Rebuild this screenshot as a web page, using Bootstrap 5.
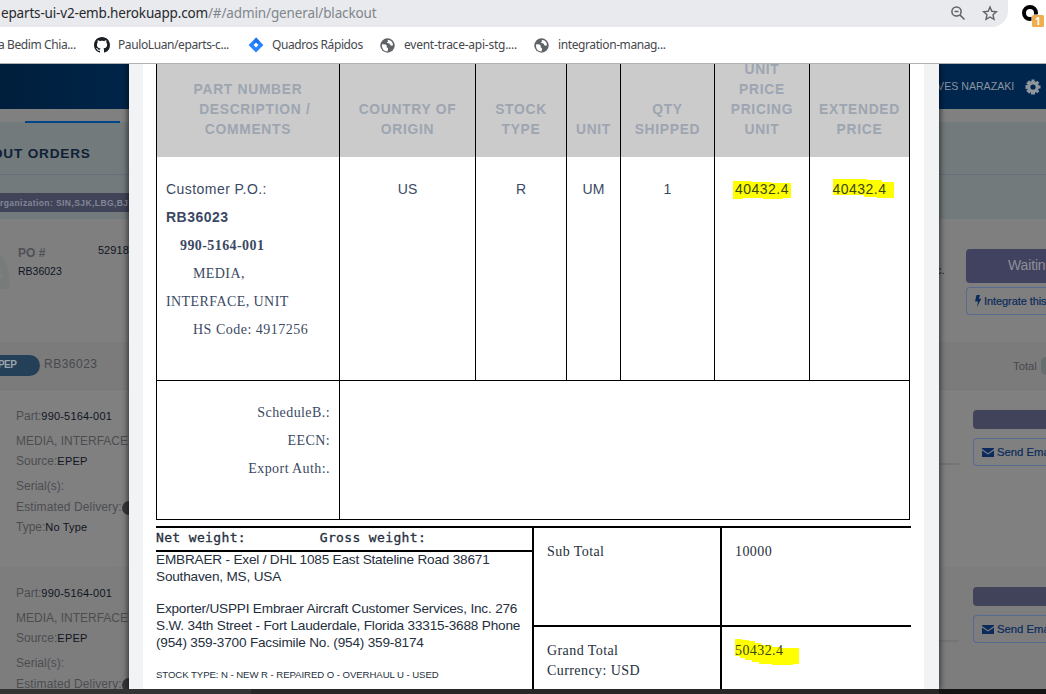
<!DOCTYPE html>
<html lang="en">
<head>
<meta charset="utf-8">
<title>Blackout orders</title>
<link href="https://cdn.jsdelivr.net/npm/bootstrap@5.3.0/dist/css/bootstrap.min.css" rel="stylesheet">
<style>
body{width:1046px;height:694px;overflow:hidden;font-family:"Liberation Sans",Arial,sans-serif;font-size:12px;line-height:20px;color:#3a4963;background:#fff;white-space:nowrap}
svg{display:block;flex:none}
.chrome-ui{font-family:"Noto Sans","Open Sans",sans-serif}
.address{height:27px;width:1008px;background:#e8eaed;border-radius:0 0 16px 0;font-size:13.5px;line-height:27px;color:#80868b;padding-left:1px;letter-spacing:-.13px}
.address b{font-weight:400;color:#27292d;letter-spacing:-.17px}
.ext{width:38px;height:27px}
.bookmarks{height:37px;border-bottom:1px solid #b3b3b3;font-size:12px;color:#45484d;line-height:36px;letter-spacing:-.4px}
.stage{height:625px;display:grid;grid-template-columns:129px 810px 107px;overflow:hidden}
.side{background:#808080;overflow:hidden;height:625px;min-width:0}
.top-l{height:45px;background:linear-gradient(90deg,#001e3c,#002549)}
.top-r{height:45px;background:#00264e;color:#8b939d;font-size:10.6px;line-height:45px}
.tabs{height:14px;border-bottom:1px solid #747a7e}
.tabline{width:95px;height:2px;background:#004789;margin-left:25px;margin-top:12px;position:relative}
.teal{background:#727a7b}
.head{height:52px;border-bottom:1px solid #666f83;line-height:62px;font-size:13.6px;font-weight:700;letter-spacing:.8px;color:#0e2137}
.orgwrap{height:44px;padding-top:18px}
.org{background:#414459;color:#818797;height:19px;line-height:20px;font-size:8.5px;font-weight:700;letter-spacing:.42px}
.po{height:123px;background:#7f7f7f}
.band{height:48px;background:#7b7b7b;border-bottom:1px solid #777}
.pill{width:40px;height:21px;background:#243f58;border-radius:0 11px 11px 0;color:#9aa3ab;font-size:10px;line-height:19px;font-weight:700;letter-spacing:-.6px;text-indent:-2px}
.item{height:177px;padding:16px 0 0 16px;color:#4c4d51}
.item.alt{background:#7d7d7d}
.item b,.dk{font-weight:400;color:#10151f;font-size:11px}
.item b{letter-spacing:.18px}
.item div{height:20px}
.est{letter-spacing:.13px}
.dot{display:inline-block;width:14px;height:14px;border-radius:7px;background:#37383a;vertical-align:-4px}
.bigbtn{background:#41425f;color:#8e8f98;height:34px;border-radius:4px 0 0 4px;font-size:14px;line-height:32px;padding-left:42px;letter-spacing:-.15px}
.obtn{border:1px solid #566b8f;border-right:0;border-radius:4px 0 0 4px;height:28px;color:#0b2b5c;padding-left:8px;-webkit-text-stroke:.2px #0b2b5c}
.bar{height:19px;background:#41435a;border-radius:4px 0 0 4px}
.rule{width:20px;height:2px;margin:53px 14px 0 0;background:#747474;flex:none}
.dlg{background:#f1f3f5;padding:0 15px 0 14px;box-shadow:0 0 6px 1px rgba(0,0,0,.65);z-index:2;height:625px;overflow:visible}
.sheet{background:#fff;height:625px;padding:0 13px;overflow:hidden}
.lines{display:grid;grid-template-columns:183px 136px 91px 54px 94px 95px 101px}
.lines>div{border-left:1px solid #000;overflow:hidden}
.lines>div.last{border-right:1px solid #000}
.lines .th0{height:93px;background:#cbcbcb;color:#9da5b1;font-weight:700;font-size:13.8px;letter-spacing:.72px;display:flex;align-items:flex-end;justify-content:center;text-align:center;padding-bottom:17px}
.lines .td0{height:223px;padding-top:18px;text-align:center;font-size:14px;line-height:28px}
.lines .left{text-align:left;padding-left:9px}
.ser{font-family:"Liberation Serif",Tinos,serif;font-size:14px;letter-spacing:.42px}
.lines .ser{position:relative;top:1px}
.sch{height:140px;border:1px solid #000;margin-right:1px;line-height:28px}
.sch .k{width:183px;border-right:1px solid #000;padding:18px 9px 0 0;text-align:right}
.foot{margin-top:6px;height:170px;width:755px;border-top:2px solid #000;display:grid;grid-template-columns:376px 190px 189px;color:#252f3d}
.net{height:24px;border-bottom:2px solid #000;font:13px/20px "DejaVu Sans Mono",monospace;letter-spacing:.36px;white-space:pre;-webkit-text-stroke:.3px #252f3d}
.addr{font-size:13.6px;line-height:17px;letter-spacing:-.19px;position:relative;top:-1px}
.cellv{border-left:2px solid #000;padding-left:13px}
.sub0{height:99px;padding-top:14px;border-bottom:2px solid #000;margin-left:-13px;padding-left:13px}
.hl{position:relative;display:inline-block;z-index:0;color:#3b4717}
.hl svg{position:absolute;z-index:-1;overflow:visible;left:0;top:0}
.strip{height:5px;background:linear-gradient(90deg,#333 0 251px,#272727 251px 939px,#141414 939px)}
</style>
</head>
<body>
<div class="chrome-ui">
  <div class="d-flex">
    <div class="address d-flex"><span><b>eparts-ui-v2-emb.herokuapp.com</b>/#/admin/general/blackout</span>
      <svg class="ms-auto" style="margin-right:17px" width="14" height="27" fill="none" stroke="#5f6368" stroke-width="1.5"><circle cx="5.500" cy="11.500" r="4.600"/><path d="M8.900 14.900l4.600 4.600M3.500 11.500h4"/></svg>
      <svg style="margin-right:10px" width="16" height="27" fill="none" stroke="#5f6368" stroke-width="1.400"><path d="M8 7l1.800 4.300 4.700.4-3.500 3.100 1 4.600L8 17l-4 2.400 1-4.600-3.500-3.100 4.700-.4z"/></svg>
    </div>
    <svg class="ext" viewBox="0 0 38 27"><circle cx="22" cy="13" r="6" fill="none" stroke="#000" stroke-width="4"/><rect x="23.500" y="14.500" width="13" height="12.500" fill="#fff"/><rect x="24" y="15" width="12" height="12" rx="1.500" fill="#f0ad4e"/><text x="27" y="25" font-size="10" font-weight="700" fill="#fff">1</text></svg>
  </div>
  <div class="bookmarks d-flex align-items-center">
    <span class="flex-shrink-0" style="width:94px;text-indent:-2px">a Bedim Chia...</span>
    <svg width="16" height="16" viewBox="0 0 16 16" fill="#1b1f23"><path d="M8 0C3.580 0 0 3.580 0 8c0 3.540 2.290 6.530 5.470 7.590.4.070.55-.17.55-.38 0-.19-.01-.82-.01-1.490-2.010.37-2.530-.49-2.690-.94-.09-.23-.48-.94-.82-1.130-.28-.15-.68-.52-.01-.53.63-.01 1.080.58 1.230.82.72 1.210 1.870.87 2.330.66.070-.52.28-.87.51-1.070-1.780-.2-3.640-.89-3.640-3.950 0-.87.31-1.590.82-2.150-.08-.2-.36-1.020.08-2.120 0 0 .67-.21 2.200.82.64-.18 1.320-.27 2-.27s1.360.09 2 .27c1.530-1.040 2.200-.82 2.200-.82.44 1.100.16 1.920.08 2.120.51.56.82 1.270.82 2.150 0 3.070-1.870 3.750-3.650 3.950.29.25.54.73.54 1.480 0 1.070-.01 1.930-.01 2.200 0 .21.15.46.55.38A8.010 8.010 0 0 0 16 8c0-4.420-3.580-8-8-8z"/></svg>
    <span class="flex-shrink-0" style="width:130px;padding-left:8px">PauloLuan/eparts-c...</span>
    <svg style="margin-left:8px" width="16" height="16" viewBox="0 0 16 16"><path d="M8 .6L15.400 8 8 15.400.6 8z" fill="#2684ff"/><path d="M8 .6l4 4.200L8 8 5.800 5.800z" fill="#1f6fe8"/><path d="M8 5.600L10.400 8 8 10.400 5.600 8z" fill="#fff"/></svg>
    <span class="flex-shrink-0" style="width:116px;padding-left:8px">Quadros Rápidos</span>
    <svg width="15" height="15" viewBox="0 0 15 15"><circle cx="7.500" cy="7.500" r="7.200" fill="#5f6368"/><path d="M2 6.500c3-.5 5 .2 4.700 2.300-.2 1.400 1.600.8 1.400 2.300l-.6 2.300C4 13.500 1.500 10.500 2 6.500zM7.500 2C8.500 3 8 4 6.700 4.600 8 5.500 9.500 5 10 6.500c.8 1.500 2 1.200 3 .8C13 4 10.500 1.700 7.500 2z" fill="#fff"/></svg>
    <span class="flex-shrink-0" style="width:131px;padding-left:9px;letter-spacing:-.24px">event-trace-api-stg....</span>
    <svg style="margin-left:8px" width="15" height="15" viewBox="0 0 15 15"><circle cx="7.500" cy="7.500" r="7.200" fill="#5f6368"/><path d="M2 6.500c3-.5 5 .2 4.700 2.300-.2 1.400 1.600.8 1.400 2.300l-.6 2.300C4 13.500 1.500 10.500 2 6.500zM7.500 2C8.500 3 8 4 6.700 4.600 8 5.500 9.500 5 10 6.500c.8 1.500 2 1.200 3 .8C13 4 10.500 1.700 7.500 2z" fill="#fff"/></svg>
    <span style="padding-left:9px">integration-manag...</span>
  </div>
</div>

<div class="stage">
  <div class="side">
    <div class="top-l"></div>
    <div class="tabs d-flex"><div class="tabline"></div></div>
    <div class="teal head"><span style="margin-left:-8px">OUT ORDERS</span></div>
    <div class="teal orgwrap"><div class="org">rganization: SIN,SJK,LBG,BJC</div></div>
    <div class="po d-flex">
      <svg width="18" height="123"><path d="M0 36C7 43 10 52 10 70H0V59h3L0 50z" fill="#777c7b"/></svg>
      <div style="width:81px;padding-top:24px"><div style="font-weight:700;color:#4f5156;line-height:20px">PO #</div><div class="dk" style="line-height:16px;font-size:10.5px">RB36023</div></div>
      <div class="dk" style="padding-top:21px;letter-spacing:.1px">52918</div>
    </div>
    <div class="band d-flex"><div class="pill" style="margin-top:13px">PEP</div><span style="padding:12px 0 0 4px;color:#47494d;letter-spacing:.5px">RB36023</span></div>
    <div class="item"><div>Part:<b>990-5164-001</b></div><div style="margin-top:5px">MEDIA, INTERFACE</div><div>Source:<b>EPEP</b></div><div style="margin-top:5px">Serial(s):</div><div class="est" style="margin-top:1px">Estimated Delivery:<span class="dot"></span></div><div>Type:<b>No Type</b></div></div>
    <div class="item alt"><div>Part:<b>990-5164-001</b></div><div style="margin-top:5px">MEDIA, INTERFACE</div><div>Source:<b>EPEP</b></div><div style="margin-top:5px">Serial(s):</div><div class="est" style="margin-top:1px">Estimated Delivery:<span class="dot"></span></div></div>
  </div>

  <div class="dlg">
    <div class="sheet">
      <div class="lines">
        <div class="th0"><div>PART NUMBER<br>&nbsp;&nbsp;&nbsp;DESCRIPTION /<br>COMMENTS</div></div>
        <div class="th0">COUNTRY OF<br>ORIGIN</div>
        <div class="th0">STOCK<br>TYPE</div>
        <div class="th0">UNIT</div>
        <div class="th0">QTY<br>SHIPPED</div>
        <div class="th0">UNIT<br>PRICE<br>PRICING<br>UNIT</div>
        <div class="th0 last">EXTENDED<br>PRICE</div>
        <div class="td0 left"><div style="letter-spacing:.45px">Customer P.O.:</div><div class="fw-bold" style="letter-spacing:.5px">RB36023</div><div class="ser fw-bold" style="padding-left:14px">990-5164-001</div><div class="ser" style="padding-left:27px">MEDIA,</div><div class="ser">INTERFACE, UNIT</div><div class="ser" style="padding-left:27px;letter-spacing:.5px">HS Code: 4917256</div></div>
        <div class="td0">US</div>
        <div class="td0">R</div>
        <div class="td0">UM</div>
        <div class="td0">1</div>
        <div class="td0"><span class="hl" style="letter-spacing:.5px"><svg width="58" height="28"><path d="M-2 6H16V7H36V8H56V23H48V24H28V23H8V24H-2z" fill="#ff0"/></svg>40432.4</span></div>
        <div class="td0 last"><span class="hl" style="letter-spacing:.5px"><svg width="64" height="28"><path d="M1 4H35V5H50V7H62V23H45V22H32V20H1z" fill="#ff0"/></svg>40432.4</span></div>
      </div>
      <div class="sch d-flex ser"><div class="k">ScheduleB.:<br>EECN:<br>Export Auth:.</div></div>
      <div class="foot">
        <div><div class="net">Net weight:         Gross weight:</div>
          <div class="addr">EMBRAER - Exel / DHL 1085 East Stateline Road 38671<br>Southaven, MS, USA</div>
          <div class="addr" style="margin-top:15px">Exporter/USPPI Embraer Aircraft Customer Services, Inc. 276<br>S.W. 34th Street - Fort Lauderdale, Florida 33315-3688 Phone<br>(954) 359-3700 Facsimile No. (954) 359-8174</div>
          <div style="font-size:9.6px;margin-top:13px;letter-spacing:-.06px">STOCK TYPE: N - NEW R - REPAIRED O - OVERHAUL U - USED</div>
        </div>
        <div class="cellv ser" style="margin-right:2px"><div class="sub0" style="margin-right:-2px">Sub Total</div><div style="padding-top:14px">Grand Total<br>Currency: USD</div></div>
        <div class="cellv ser" style="margin-left:-2px"><div class="sub0">10000</div><div style="padding-top:14px"><span class="hl"><svg width="64" height="20"><path d="M0-2H7V-1H14V0H20V2H26V4H37V6H45V7H64V23H58V24H37V23H24V21H17V19H10V17H5V15H0z" fill="#ff0"/></svg>50432.4</span></div></div>
      </div>
    </div>
  </div>

  <div class="side">
    <div class="top-r d-flex"><span style="margin-left:-7px;width:93px">LVES NARAZAKI</span>
      <svg width="16" height="45" viewBox="-8 -23 16 45"><g fill="#8f969e"><circle r="5.900"/><path id="tooth" d="M-1.500-7.500h3l.6 15h-4.200z"/><path d="M-1.500-7.500h3l.6 15h-4.200z" transform="rotate(45)"/><path d="M-1.500-7.500h3l.6 15h-4.200z" transform="rotate(90)"/><path d="M-1.500-7.500h3l.6 15h-4.200z" transform="rotate(135)"/></g><circle r="2.600" fill="#00264e"/></svg></div>
    <div class="tabs"></div>
    <div class="teal head"></div><div class="teal orgwrap"></div>
    <div class="po d-flex"><div class="dk flex-shrink-0" style="width:27px;padding-top:41px"><span style="margin-left:-3px">c.</span></div>
      <div class="flex-grow-1" style="padding-top:30px;min-width:0"><div class="bigbtn">Waitin</div>
        <div class="obtn d-flex align-items-center" style="margin-top:4px;font-size:11px;letter-spacing:-.08px"><svg style="margin-right:3px" width="6" height="12" viewBox="0 0 6 12"><path d="M1.500 0H5L4 3.800H6.300L2 12l1-5.500H0z" fill="#0b2b5c"/></svg>Integrate this</div></div></div>
    <div class="band d-flex"><span class="flex-shrink-0" style="padding:14px 0 0 74px;width:102px;color:#47494d;font-size:11.3px">Total</span><div style="margin-top:15px;width:12px;height:18px;border-radius:9px 0 0 9px;background:#666f6d"></div></div>
    <div class="item d-flex" style="padding:20px 0 0"><span class="rule"></span><div class="flex-grow-1" style="min-width:0"><div class="bar" style="height:19px"></div><div class="obtn d-flex align-items-center" style="height:28px;margin-top:9px;font-size:11.3px"><svg style="margin-right:3px" width="12" height="10" viewBox="0 0 12 10" fill="#0b2b5c"><path d="M0 1h12v1L6 6.200 0 2z"/><path d="M0 3.400l6 4.200 6-4.200V10H0z"/></svg>Send Ema</div></div></div>
    <div class="item alt d-flex" style="padding:20px 0 0"><span class="rule"></span><div class="flex-grow-1" style="min-width:0"><div class="bar" style="height:19px"></div><div class="obtn d-flex align-items-center" style="height:28px;margin-top:9px;font-size:11.3px"><svg style="margin-right:3px" width="12" height="10" viewBox="0 0 12 10" fill="#0b2b5c"><path d="M0 1h12v1L6 6.200 0 2z"/><path d="M0 3.400l6 4.200 6-4.200V10H0z"/></svg>Send Ema</div></div></div>
  </div>
</div>
<div class="strip"></div>
<script src="https://cdn.jsdelivr.net/npm/bootstrap@5.3.0/dist/js/bootstrap.bundle.min.js"></script>
</body>
</html>
